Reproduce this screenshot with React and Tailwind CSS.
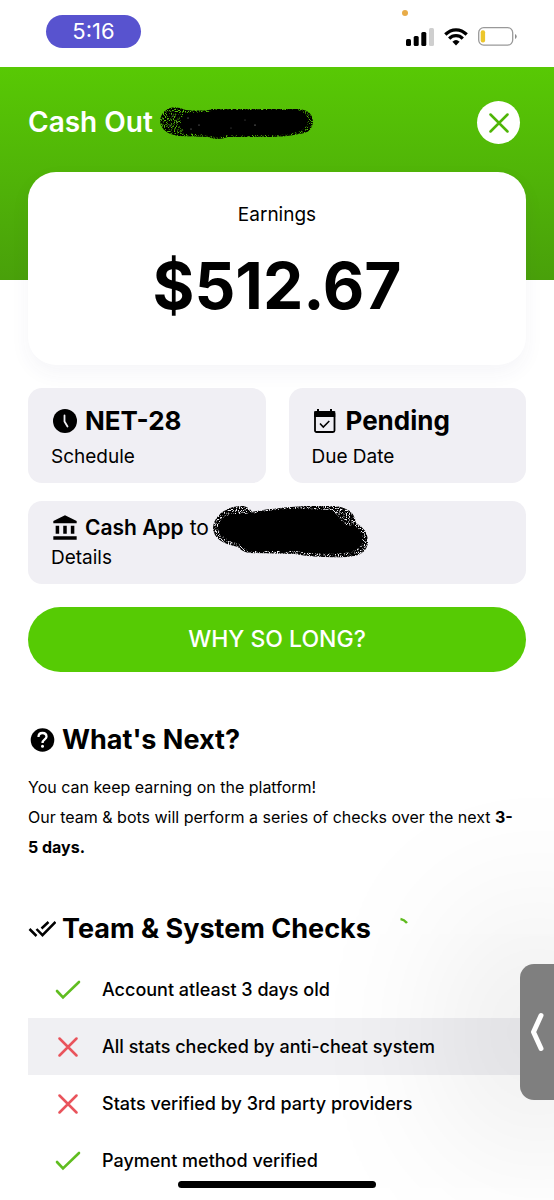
import { MdAccountBalance } from "react-icons/md";

const checks = [
    { id: 1, label: "Account atleast 3 days old", passed: true },
    { id: 2, label: "All stats checked by anti-cheat system", passed: false, highlight: true },
    { id: 3, label: "Stats verified by 3rd party providers", passed: false },
    { id: 4, label: "Payment method verified", passed: true },
];

function StatusBar() {
    return (
        <div className="flex h-[67px] items-start justify-between pt-[15px] pr-[37px] pl-[46px]">
            <div className="flex h-[33px] w-[95px] items-center justify-center rounded-full bg-[#5853cf] text-[22px] text-white">
                5:16
            </div>
            <div className="relative flex items-center gap-[10px] pt-3">
                <span className="absolute -top-[5px] -left-[4px] h-[6px] w-[6px] rounded-full bg-[#e8ac48]" />
                <svg width="28" height="18" viewBox="0 0 28 18" aria-label="Signal">
                    <rect x="0" y="11" width="5" height="7" rx="1.5" />
                    <rect x="7.7" y="8" width="5" height="10" rx="1.5" />
                    <rect x="15.3" y="4" width="5" height="14" rx="1.5" />
                    <rect x="23" y="0" width="5" height="18" rx="1.5" fill="#cfcfcf" />
                </svg>
                <svg width="24" height="18" viewBox="0 0 24 18" fill="none" stroke="#000" strokeWidth="3.2" aria-label="Wi-Fi">
                    <path d="M1.3 6.5Q6 1.8 12 1.8T22.7 6.5" />
                    <path d="M5.2 10.6Q8 7.7 12 7.7T18.8 10.6" />
                    <path d="M8.4 13.8Q12 10.4 15.6 13.8L12 17.6Z" fill="#000" stroke="none" />
                </svg>
                <svg width="39" height="19" viewBox="0 0 39 19" fill="none" aria-label="Battery">
                    <rect x="0.7" y="0.7" width="34" height="17.4" rx="5" stroke="#999" strokeWidth="1.3" />
                    <rect x="2.7" y="3.2" width="4.4" height="12.4" rx="2" fill="#ecc62b" />
                    <path d="M37 7v5q1.7-.7 1.7-2.5T37 7" fill="#8c8c8c" />
                </svg>
            </div>
        </div>
    );
}

// 가려진 이름: 거친 브러시 느낌
function NameScribble() {
    return (
        <svg width="154" height="34" viewBox="0 0 154 34" aria-hidden="true">
            <defs>
                <filter id="grain" x="0" y="0" width="100%" height="100%">
                    <feTurbulence type="fractalNoise" baseFrequency="0.9" numOctaves="2" seed="4" />
                    <feColorMatrix values="0 0 0 0 0  0 0 0 0 0  0 0 0 0 0  6 0 0 0 -2" />
                    <feComposite in2="SourceGraphic" operator="in" />
                </filter>
            </defs>
            <path
                filter="url(#grain)"
                d="M0 15C1 4 11-1 20 2Q26 5 35 4.500Q47 5 52 3H139Q152 4 153 15Q153 27 139 28Q126 31 110 31H68Q57 35 48 31L18 30Q1 27 0 15Z"
            />
            <path d="M25 7L48 6Q54 3 64 4H138Q147 6 148 15Q147 24 137 26Q124 30 108 29H66Q56 33 48 29L25 27Q17 17 25 7Z" />
            <g fill="#bbb">
                <circle cx="13" cy="10" r="0.5" />
                <circle cx="17" cy="16" r="0.6" />
                <circle cx="10" cy="20" r="0.6" />
                <circle cx="28" cy="12" r="0.5" />
                <circle cx="31" cy="23" r="0.5" />
                <circle cx="39" cy="19" r="0.5" />
                <circle cx="85" cy="14" r="0.4" />
                <circle cx="95" cy="19" r="0.6" />
                <circle cx="71" cy="22" r="0.4" />
            </g>
        </svg>
    );
}

function AccountScribble() {
    return (
        <svg width="156" height="53" viewBox="0 0 156 53" aria-hidden="true">
            <path
                filter="url(#grain)"
                d="M0 23C1 9 16 0 31 1Q37 3 39 7Q65 2 92 1H123Q142 4 143 18Q155 24 155 37Q154 51 134 52Q103 53 82 49L36 48Q28 46 25 42Q0 37 0 23Z"
            />
            <path d="M13 11Q20 8 38 9Q65 3 94 4L118 5Q126 10 131 20L142 21Q151 27 149 39Q144 47 132 48Q104 50 83 46L37 46Q29 43 26 39Q6 33 5 23Q6 15 13 11Z" />
        </svg>
    );
}

function ClockIcon() {
    return (
        <svg width="28" height="28" viewBox="0 0 28 28" fill="none" aria-hidden="true">
            <circle cx="14" cy="14" r="12" fill="#000" />
            <path d="M13.500 8.500v6l3 5" stroke="#f0eff4" strokeWidth="1.800" strokeLinecap="round" strokeLinejoin="round" />
        </svg>
    );
}

function CalendarIcon() {
    return (
        <svg width="24" height="26" viewBox="0 0 24 26" fill="none" aria-hidden="true">
            <path d="M6 1v4M19 1v4" stroke="#000" strokeWidth="2" />
            <rect x="3" y="4" width="19.500" height="20" rx="1.5" stroke="#000" strokeWidth="1.800" />
            <path d="M2.200 3.200h21V9h-21z" fill="#000" />
            <path d="M8 15.500l3.300 3.500 6-6" stroke="#000" strokeWidth="1.600" />
        </svg>
    );
}

function HelpIcon() {
    return (
        <svg width="28" height="28" viewBox="0 0 28 28" fill="none" aria-hidden="true">
            <circle cx="14.500" cy="14" r="11.800" fill="#000" />
            <path d="M10.500 11Q10.500 7 14.500 7T18.500 10.800C18.500 13.500 14.500 13.500 14.500 17" stroke="#fff" strokeWidth="2.300" />
            <circle cx="14.500" cy="20.300" r="1.500" fill="#fff" />
        </svg>
    );
}

function DoubleCheckIcon() {
    return (
        <svg width="28" height="28" viewBox="0 0 28 28" fill="none" stroke="#000" strokeWidth="2.500" aria-hidden="true">
            <path d="M1.500 14L8.500 21M8.500 14L14.500 20.200 27.500 7M13.500 13.500L20.500 7" />
        </svg>
    );
}

function CheckMark() {
    return (
        <svg width="26" height="20" viewBox="0 0 26 20" fill="none" stroke="#60bd20" strokeWidth="2.600" strokeLinecap="round" aria-label="Passed">
            <path d="M2 11l6 6.500L24 2" />
        </svg>
    );
}

function CrossMark({ label, className }) {
    return (
        <svg viewBox="0 0 20 20" fill="none" stroke="currentColor" strokeWidth="2.500" strokeLinecap="round" aria-label={label} className={className}>
            <path d="M1.500 1.500l17 17M18.500 1.500l-17 17" />
        </svg>
    );
}

export default function App() {
    return (
        <div className="min-h-screen overflow-x-hidden bg-white font-['Inter',sans-serif] text-black">
            <StatusBar />

            <header className="flex h-[213px] items-start justify-between bg-linear-to-b from-[#58c904] to-[#49a00a] px-7 pt-[34px]">
                <div className="flex items-center gap-[7px]">
                    <h1 className="text-[28px] leading-[43px] font-semibold text-white">Cash Out</h1>
                    <NameScribble />
                </div>
                <button aria-label="Close" className="mr-[6px] flex h-[43px] w-[43px] items-center justify-center rounded-full bg-white text-[#4fb507]">
                    <CrossMark className="h-5 w-5" />
                </button>
            </header>

            <main className="px-7 pb-3">
                {/* 수익 카드 */}
                <section className="-mt-[108px] h-[193px] rounded-[28px] bg-white pt-7 text-center shadow-[0_8px_20px_rgba(60,60,110,0.05)]">
                    <p className="text-[19px] leading-[30px]">Earnings</p>
                    <p className="mt-[18px] text-[64px] leading-[76px] font-bold">$512.67</p>
                </section>

                <div className="mt-[23px] grid grid-cols-2 gap-[23px]">
                    <section className="h-[95px] rounded-[14px] bg-[#f0eff4] px-[23px] pt-4">
                        <h2 className="flex items-center gap-[6px] text-[26px] leading-[34px] font-bold">
                            <ClockIcon />
                            NET-28
                        </h2>
                        <p className="mt-1 text-[19px] leading-[30px]">Schedule</p>
                    </section>
                    <section className="h-[95px] rounded-[14px] bg-[#f0eff4] px-[23px] pt-4">
                        <h2 className="flex items-center gap-[10px] text-[26px] leading-[34px] font-bold">
                            <CalendarIcon />
                            Pending
                        </h2>
                        <p className="mt-1 text-[19px] leading-[30px]">Due Date</p>
                    </section>
                </div>

                <section className="relative mt-[18px] h-[83px] rounded-[14px] bg-[#f0eff4] px-[23px] pt-3">
                    <div className="flex items-center gap-[6px] text-[21px] leading-[30px]">
                        <MdAccountBalance size={28} />
                        <p>
                            <strong className="font-semibold">Cash App</strong> to
                        </p>
                    </div>
                    <p className="text-[19px] leading-[30px]">Details</p>
                    <div className="absolute top-1 left-[185px]">
                        <AccountScribble />
                    </div>
                </section>

                <button className="mt-[23px] h-[65px] w-full rounded-full bg-[#56cb04] text-[23px] font-medium text-white">
                    WHY SO LONG?
                </button>

                <section className="mt-[51px]">
                    <h2 className="flex items-center gap-[6px] text-[27px] leading-[34px] font-bold">
                        <HelpIcon />
                        What's Next?
                    </h2>
                    <div className="mt-[15px] text-[16px] leading-[30px]">
                        <p>You can keep earning on the platform!</p>
                        <p>
                            Our team &amp; bots will perform a series of checks over the next{" "}
                            <strong>
                                3-
                                <br />5 days.
                            </strong>
                        </p>
                    </div>
                </section>

                <section className="mt-[50px]">
                    <h2 className="flex items-center gap-[6px] text-[27px] leading-[34px] font-bold">
                        <DoubleCheckIcon />
                        Team &amp; System Checks
                        <svg width="36" height="28" viewBox="0 0 36 28" fill="none" className="ml-4" aria-label="Loading">
                            <path d="M7.500 4Q11 4.500 14 8" stroke="#60bd20" strokeWidth="2.500" />
                        </svg>
                    </h2>
                    <ul className="mt-[15px]">
                        {checks.map((check) => (
                            <li
                                key={check.id}
                                className={`flex h-[57px] items-center gap-[21px] pl-[27px] text-[18px] font-medium ${check.highlight ? "bg-[#f0f0f3]" : ""}`}
                            >
                                <span className="flex w-[26px] justify-center">
                                    {check.passed ? <CheckMark /> : <CrossMark label="Failed" className="h-5 w-5 text-[#e9545c]" />}
                                </span>
                                {check.label}
                            </li>
                        ))}
                    </ul>
                </section>
            </main>

            {/* 사이드 탭 */}
            <button
                aria-label="Open side panel"
                className="fixed right-0 bottom-[100px] flex h-[136px] w-[34px] items-center justify-center rounded-l-[14px] bg-[#7f7f7f] shadow-[0_0_170px_30px_rgba(0,0,0,0.17)]"
            >
                <svg width="14" height="40" viewBox="0 0 14 40" fill="none" stroke="#fff" strokeWidth="5" strokeLinecap="round" strokeLinejoin="round" aria-hidden="true">
                    <path d="M11 3.500L3.500 20 11 36.500" />
                </svg>
            </button>
            <div className="fixed inset-x-0 bottom-3 mx-auto h-[7px] w-[198px] rounded-full bg-black" />
        </div>
    );
}
